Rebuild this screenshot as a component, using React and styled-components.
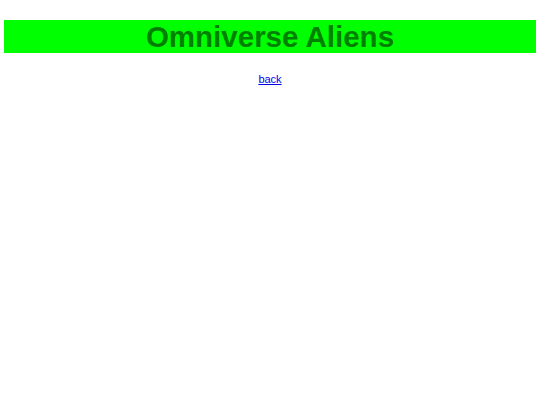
import React from 'react'
import { styled, createGlobalStyle } from 'styled-components'

const GlobalStyle = createGlobalStyle`
  body {
    margin: 0 4px;
    font-family: 'Liberation Sans', Arial, sans-serif;
    background: #fff;
  }
`

function App() {
  return (
    <>
      <GlobalStyle />
      <Title>Omniverse Aliens</Title>
      <Nav>
        <BackLink href="#">back</BackLink>
      </Nav>
    </>
  )
}

export default App

const Title = styled.h1`
  margin: 20px 0 0;
  height: 33px;
  line-height: 34px;
  background-color: #00ff00;
  color: #008000;
  font-size: 29.5px;
  font-weight: bold;
  text-align: center;
`
const Nav = styled.p`
  margin: 20px 0 0;
  text-align: center;
  font-size: 11px;
  line-height: 13px;
`
const BackLink = styled.a`
  color: #0000ee;
  text-decoration: underline;
`
